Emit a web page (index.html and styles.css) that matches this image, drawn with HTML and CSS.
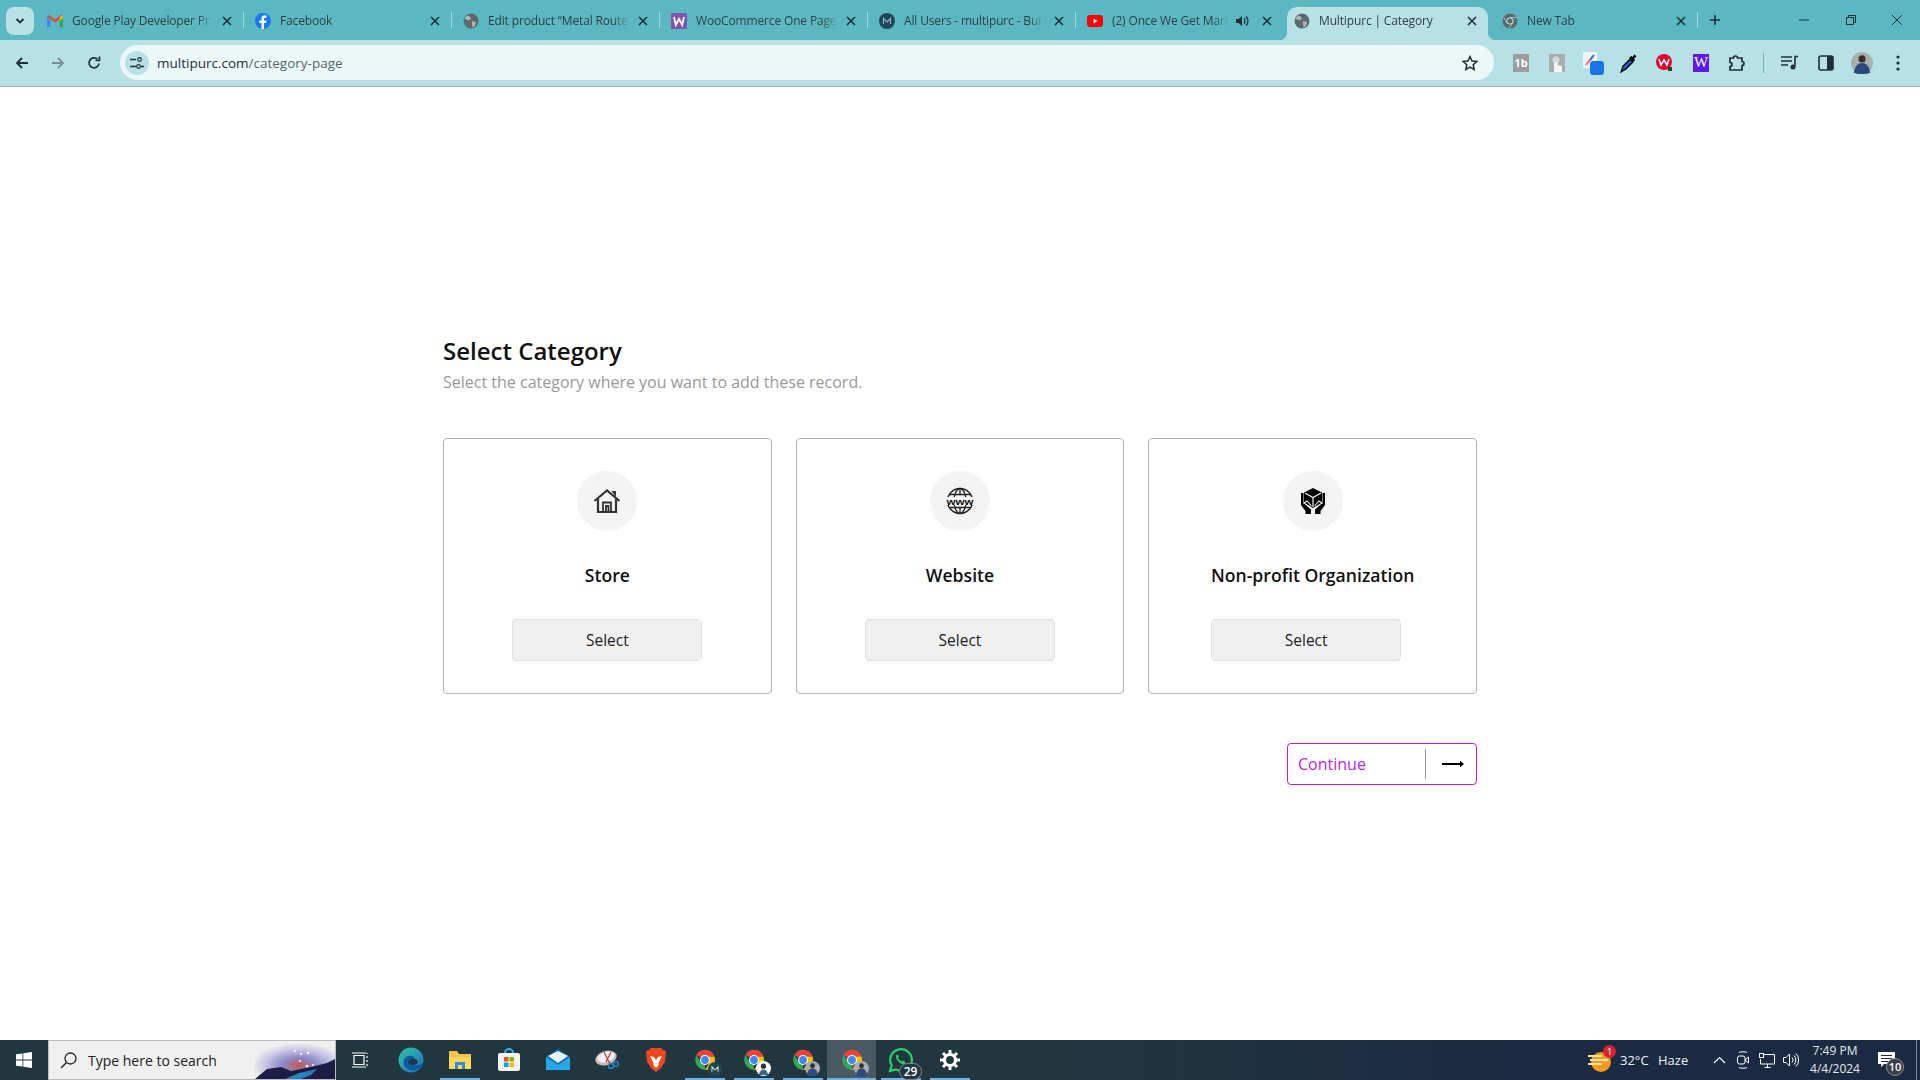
FILE: index.html
```html
<!DOCTYPE html>
<html lang="en">

<head>
  <meta charset="UTF-8">
  <title>Multipurc | Category</title>
  <link rel="stylesheet" href="styles.css">
</head>

<body>

  <svg class="defs" width="0" height="0">
    <defs>
      <symbol id="x" viewBox="0 0 10 10">
        <path d="M1 1l8 8M9 1l-8 8" stroke="#1f2f33" stroke-width="1.6" fill="none" />
      </symbol>
      <symbol id="globe" viewBox="0 0 16 16">
        <circle cx="8" cy="8" r="7.5" fill="#5c686b" />
        <path d="M4 2.500l3 1 1 2-2 2-3-1-1.500-1zM9 8l4 1-1 4-2.500 1.500L9 11z" fill="#a9b7ba" />
      </symbol>
      <symbol id="chrome" viewBox="0 0 24 24">
        <path d="M12 12L3.300 7A10 10 0 0 1 21.500 8.500H12z" fill="#ea4335" />
        <path d="M12 22A10.500 10.500 0 0 1 3.300 7L8 14.500 12 16z" fill="#34a853" />
        <path d="M21.500 8.500A10.500 10.500 0 0 1 12 22l4-6.500 0-7z" fill="#fbbc05" />
        <circle cx="12" cy="12" r="5" fill="#fff" />
        <circle cx="12" cy="12" r="3.900" fill="#4285f4" />
      </symbol>
      <symbol id="avatar" viewBox="0 0 16 16">
        <circle cx="8" cy="8" r="8" fill="#a9aeb0" />
        <path d="M2 15c1-5 3-7 6-7s5 2 6 7l-3 1H5z" fill="#2d4a7c" />
        <circle cx="8" cy="5" r="2.600" fill="#3a2c2a" />
      </symbol>
    </defs>
  </svg>

  <div class="tabstrip">
    <button class="tab-search">
      <svg width="10" height="8" viewBox="0 0 10 8"><path d="M1.500 2L5 5.500 8.500 2" stroke="#1f2f33" stroke-width="1.800" fill="none" /></svg>
    </button>

    <div class="tab">
      <svg class="fav" viewBox="0 0 16 12"><path d="M0 2v10h3.500V5z" fill="#4285f4" /><path d="M12.500 5v7H16V2z" fill="#34a853" /><path d="M0 1.500L8 7.500l8-6-2-1.500L8 4.500 2 0z" fill="#ea4335" /><path d="M13 1l3 .5V3l-3.500 2.500z" fill="#fbbc05" /></svg>
      <span class="tab-title">Google Play Developer Pr</span>
      <svg class="close"><use href="#x" /></svg>
    </div>
    <div class="tab">
      <svg class="fav" viewBox="0 0 16 16"><circle cx="8" cy="8" r="8" fill="#1877f2" /><path d="M9 16v-6h2l.400-2.500H9V6c0-.8.400-1.300 1.400-1.300h1.100V2.500C11 2.400 10.300 2.300 9.700 2.300 7.700 2.300 6.500 3.500 6.500 5.600v1.900h-2.200V10h2.200v6z" fill="#fff" /></svg>
      <span class="tab-title">Facebook</span>
      <svg class="close"><use href="#x" /></svg>
    </div>
    <div class="tab">
      <svg class="fav"><use href="#globe" /></svg>
      <span class="tab-title">Edit product “Metal Route</span>
      <svg class="close"><use href="#x" /></svg>
    </div>
    <div class="tab">
      <svg class="fav" viewBox="0 0 16 16"><rect width="16" height="16" rx="1" fill="#7f54b3" /><path d="M3 4l1.800 8L8 6l3.200 6L13 4" stroke="#fff" stroke-width="1.800" fill="none" /></svg>
      <span class="tab-title">WooCommerce One Page</span>
      <svg class="close"><use href="#x" /></svg>
    </div>
    <div class="tab">
      <svg class="fav" viewBox="0 0 16 16"><circle cx="8" cy="8" r="8" fill="#1f4655" /><path d="M4.500 11V5.500L8 9l3.500-3.500V11" stroke="#8fb4c0" stroke-width="1.200" fill="none" /></svg>
      <span class="tab-title">All Users - multipurc - Bui</span>
      <svg class="close"><use href="#x" /></svg>
    </div>
    <div class="tab tab-plain">
      <svg class="fav" viewBox="0 0 16 12"><rect width="16" height="12" rx="3" fill="#f00" /><path d="M6.500 3.500v5l4-2.500z" fill="#fff" /></svg>
      <span class="tab-title tab-title-audio">(2) Once We Get Marr</span>
      <svg class="speaker" viewBox="0 0 14 12"><path d="M0 4v4h2.500L6 11V1L2.500 4z" fill="#1f2f33" /><path d="M8 3.500a3.500 3.500 0 0 1 0 5M10 1.500a6 6 0 0 1 0 9" stroke="#1f2f33" stroke-width="1.300" fill="none" /></svg>
      <svg class="close"><use href="#x" /></svg>
    </div>
    <div class="tab tab-active">
      <svg class="fav"><use href="#globe" /></svg>
      <span class="tab-title">Multipurc | Category</span>
      <svg class="close"><use href="#x" /></svg>
    </div>
    <div class="tab tab-last">
      <svg class="fav" viewBox="0 0 16 16"><circle cx="8" cy="8" r="7.500" fill="#5c686b" /><circle cx="8" cy="8" r="3.600" fill="#b5d9de" /><circle cx="8" cy="8" r="2.500" fill="#5c686b" /><path d="M8 4.400h6.500M5 10l-3-5.500M10.800 10L7 15" stroke="#b5d9de" stroke-width=".8" /></svg>
      <span class="tab-title">New Tab</span>
      <svg class="close"><use href="#x" /></svg>
    </div>

    <svg class="new-tab" viewBox="0 0 12 12"><path d="M6 1v10M1 6h10" stroke="#1f2f33" stroke-width="1.600" /></svg>

    <div class="window-controls">
      <svg viewBox="0 0 12 12" width="12" height="12"><path d="M1 6h10" stroke="#1f2f33" /></svg>
      <svg viewBox="0 0 12 12" width="12" height="12"><path d="M1.500 3.500h7v7h-7zM3.500 3.500v-2h7v7h-2" stroke="#1f2f33" fill="none" /></svg>
      <svg viewBox="0 0 12 12" width="12" height="12"><path d="M1 1l10 10M11 1L1 11" stroke="#1f2f33" /></svg>
    </div>
  </div>

  <div class="toolbar">
    <svg class="nav-icon" viewBox="0 0 16 16"><path d="M14 8H3M8 3L3 8l5 5" stroke="#1f2f33" stroke-width="1.800" fill="none" /></svg>
    <svg class="nav-icon" viewBox="0 0 16 16"><path d="M2 8h11M8 3l5 5-5 5" stroke="#7c9094" stroke-width="1.800" fill="none" /></svg>
    <svg class="nav-icon" viewBox="0 0 16 16"><path d="M13 8.500A5 5 0 1 1 11.500 4.200M13.500 1.500v4h-4" stroke="#1f2f33" stroke-width="1.700" fill="none" /></svg>

    <div class="omnibox">
      <span class="site-info">
        <svg width="14" height="12" viewBox="0 0 14 12"><path d="M0 2.500h6M0 9.500h6M10 9.500h4" stroke="#1f2f33" stroke-width="1.400" /><circle cx="9.500" cy="2.500" r="1.800" fill="none" stroke="#1f2f33" stroke-width="1.200" /><circle cx="8.500" cy="9.500" r="1.800" fill="none" stroke="#1f2f33" stroke-width="1.200" /></svg>
      </span>
      <span class="url">multipurc.com<span class="url-path">/category-page</span></span>
      <svg class="star" viewBox="0 0 16 16"><path d="M8 1.500l2 4.500 4.800.5-3.600 3.200 1 4.800L8 12.100l-4.200 2.400 1-4.800L1.200 6.500 6 6z" fill="none" stroke="#1f2f33" stroke-width="1.500" /></svg>
    </div>

    <div class="extensions">
      <span class="ext"><span class="ext-box ext-grey">1b</span></span>
      <span class="ext">
        <svg width="16" height="18" viewBox="0 0 16 18"><rect width="16" height="18" fill="#a8acac" /><circle cx="7" cy="6" r="3.500" fill="#d7dada" /><path d="M5 18V9l3-1 1 3 4 1v6z" fill="#f4f4f4" /></svg>
      </span>
      <span class="ext">
        <svg width="22" height="24" viewBox="0 0 22 24"><rect x="1" y="1" width="14" height="16" rx="2" fill="#f2f5f6" /><path d="M4 14l7-9" stroke="#e8689a" stroke-width="2" /><path d="M8 9l4-5" stroke="#3d6fc4" stroke-width="2" /><rect x="8" y="10" width="14" height="14" rx="3" fill="#1a73e8" /></svg>
      </span>
      <span class="ext">
        <svg width="18" height="20" viewBox="0 0 18 20"><path d="M1 19l2-6 7-7 3 3-7 7z" fill="#2f55b5" stroke="#000" stroke-width="1.200" /><path d="M9 5l2-2 1.500 1 2-2.500 2 2-2.500 2 1 1.500-2 2z" fill="#000" /></svg>
      </span>
      <span class="ext">
        <svg width="18" height="20" viewBox="0 0 18 20"><circle cx="8" cy="9" r="8" fill="#dd0a2b" /><path d="M3 6l2 6 3-5 3 5 2-6" stroke="#fff" stroke-width="1.500" fill="none" /><rect x="12" y="14" width="4" height="4" fill="#3a3a20" /></svg>
      </span>
      <span class="ext"><span class="ext-box ext-purple">W</span></span>
      <span class="ext">
        <svg width="18" height="18" viewBox="0 0 18 18"><path d="M2 4h3.500a2 2 0 0 1 4 0H14v3.500a2 2 0 0 1 0 4V16H2v-3.500a2 2 0 0 0 0-4z" fill="none" stroke="#1f2f33" stroke-width="1.700" /></svg>
      </span>
      <span class="toolbar-sep"></span>
      <span class="ext">
        <svg width="18" height="16" viewBox="0 0 18 16"><path d="M0 2h11M0 6h11M0 10h7" stroke="#1f2f33" stroke-width="1.600" /><path d="M14 2v9" stroke="#1f2f33" stroke-width="1.600" /><path d="M13.500 1.500H17" stroke="#1f2f33" stroke-width="1.600" /><circle cx="12" cy="12" r="2.500" fill="#1f2f33" /></svg>
      </span>
      <span class="ext">
        <svg width="16" height="16" viewBox="0 0 16 16"><rect x="1" y="1" width="14" height="14" rx="2" fill="none" stroke="#1f2f33" stroke-width="1.600" /><rect x="9" y="1" width="6" height="14" fill="#1f2f33" /></svg>
      </span>
      <span class="ext"><svg width="22" height="22"><use href="#avatar" /></svg></span>
      <span class="ext">
        <svg width="4" height="16" viewBox="0 0 4 16"><circle cx="2" cy="2" r="1.600" fill="#1f2f33" /><circle cx="2" cy="8" r="1.600" fill="#1f2f33" /><circle cx="2" cy="14" r="1.600" fill="#1f2f33" /></svg>
      </span>
    </div>
  </div>

  <main class="page">
    <div class="wrap">
      <h1>Select Category</h1>
      <p class="lead">Select the category where you want to add these record.</p>

      <div class="cards">
        <div class="card">
          <div class="card-icon">
            <svg width="28" height="26" viewBox="0 0 28 26"><path d="M1.500 13L14 2.500 26.500 13" fill="none" stroke="#333" stroke-width="2.200" /><path d="M5 11v13h18V11" fill="none" stroke="#333" stroke-width="2.200" /><path d="M10 24v-9.500h8V24M13 24v-6h2.500v6" fill="none" stroke="#333" stroke-width="1.800" /><path d="M18.500 3h4.500v6z" fill="#333" /></svg>
          </div>
          <h2>Store</h2>
          <button class="select-btn">Select</button>
        </div>
        <div class="card">
          <div class="card-icon">
            <svg width="28" height="28" viewBox="0 0 28 28">
              <circle cx="14" cy="14" r="12.500" fill="none" stroke="#222" stroke-width="1.500" />
              <ellipse cx="14" cy="14" rx="6" ry="12.500" fill="none" stroke="#222" stroke-width="1.300" />
              <path d="M14 1.500v7M14 19.500v7M3.500 7.500h21M3.500 20.500h21" stroke="#222" stroke-width="1.300" />
              <rect x="0" y="10" width="28" height="8" fill="#f4f4f4" />
              <text class="www" x="14" y="17.500" text-anchor="middle" textLength="27" lengthAdjust="spacingAndGlyphs">www</text>
            </svg>
          </div>
          <h2>Website</h2>
          <button class="select-btn">Select</button>
        </div>
        <div class="card">
          <div class="card-icon">
            <svg width="26" height="28" viewBox="0 0 26 28">
              <path d="M13 1l9 4.500v10L13 21l-9-5.500v-10z" fill="#000" />
              <path d="M5 6l8 4.500L21 6M13 10.500V20" stroke="#f4f4f4" stroke-width="1.200" fill="none" />
              <path d="M1 6h2.500v10l7.500 6.500V27H5.500v-3L1 18zM25 6h-2.500v10L15 22.500V27h5.500v-3l4.500-6z" fill="#000" />
              <path d="M3.500 16.500L7 14l4.500 5M22.500 16.500L19 14l-4.500 5" stroke="#f4f4f4" stroke-width="1.100" fill="none" />
            </svg>
          </div>
          <h2>Non-profit Organization</h2>
          <button class="select-btn select-btn-off">Select</button>
        </div>
      </div>

      <div class="actions">
        <button class="continue-btn">
          <span class="continue-label">Continue</span>
          <span class="continue-arrow">
            <svg width="22" height="8" viewBox="0 0 22 8"><path d="M0 4h19" stroke="#000" stroke-width="2" /><path d="M18 .8L22 4l-4 3.200z" fill="#000" /></svg>
          </span>
        </button>
      </div>
    </div>
  </main>

  <footer class="taskbar">
    <span class="start">
      <svg width="16" height="16" viewBox="0 0 16 16"><path d="M0 2.300l6.500-.9v6.200H0zM7.300 1.300L16 0v7.600H7.300zM0 8.400h6.500v6.200L0 13.700zM7.300 8.400H16V16l-8.700-1.300z" fill="#fff" /></svg>
    </span>
    <div class="search">
      <svg width="17" height="17" viewBox="0 0 17 17"><circle cx="10.500" cy="6.500" r="5.500" fill="none" stroke="#222" stroke-width="1.300" /><path d="M6.500 10.500L1 16" stroke="#222" stroke-width="1.500" /></svg>
      <span class="search-text">Type here to search</span>
      <svg class="search-art" width="80" height="38" viewBox="0 0 80 38">
        <defs>
          <radialGradient id="glow" cx=".55" cy=".65" r=".6">
            <stop offset="0" stop-color="#c9584f" />
            <stop offset=".35" stop-color="#8a88c8" />
            <stop offset=".7" stop-color="#c5c5e5" />
            <stop offset="1" stop-color="#f0f0f0" />
          </radialGradient>
        </defs>
        <rect width="80" height="38" fill="url(#glow)" />
        <path d="M0 38l12-10 14-2 10 4 20-4 16-4 8-4v20z" fill="#1b1d44" />
        <path d="M30 38l14-6 18-4-6 6-10 4z" fill="#2a7fc0" />
        <g fill="#fff"><circle cx="40" cy="10" r="1" /><circle cx="46" cy="13" r="1" /><circle cx="53" cy="12" r="1.300" /><circle cx="45" cy="20" r="1" /><circle cx="52" cy="25" r="1.300" /><circle cx="58" cy="24" r="1" /></g>
      </svg>
    </div>

    <div class="task-icons">
      <span class="slot slot-view">
        <svg width="16" height="16" viewBox="0 0 16 16"><path d="M2 3.500h10v9H2zM0 1h14M0 15h14M15 4v2M15 8v2M15 12v2M15 1v1" stroke="#fff" stroke-width="1.200" fill="none" /></svg>
      </span>
      <span class="slot">
        <svg width="26" height="26" viewBox="0 0 26 26">
          <defs><linearGradient id="edge" x1="0" y1="0" x2="1" y2="1"><stop offset="0" stop-color="#36c5a3" /><stop offset="1" stop-color="#1a6fc4" /></linearGradient></defs>
          <circle cx="13" cy="13" r="12.500" fill="url(#edge)" />
          <path d="M25 16c-2 7-12 10-17 5-4-4-3-10 2-12 4-1 8 1 7 5h-6c0 3 5 5 9 4 2 0 4-1 5-2z" fill="#0c59a4" />
          <ellipse cx="15" cy="15" rx="5" ry="3" fill="#21363f" />
        </svg>
      </span>
      <span class="slot slot-open">
        <svg width="24" height="20" viewBox="0 0 24 20"><path d="M1 1h8l2 3h12v15H1z" fill="#f5c242" /><rect x="1" y="7" width="22" height="12" fill="#fbd65e" /><rect x="7" y="12" width="10" height="7" fill="#2f8fd6" /><rect x="10" y="15" width="4" height="4" fill="#fbd65e" /></svg>
      </span>
      <span class="slot">
        <svg width="24" height="24" viewBox="0 0 24 24"><path d="M8 5a4 4 0 0 1 8 0" stroke="#2bb5ee" stroke-width="2" fill="none" /><rect x="1" y="5" width="22" height="18" rx="2" fill="#f3f3f3" /><rect x="7" y="9" width="4.500" height="4.500" fill="#f25022" /><rect x="12.500" y="9" width="4.500" height="4.500" fill="#7fba00" /><rect x="7" y="14.500" width="4.500" height="4.500" fill="#00a4ef" /><rect x="12.500" y="14.500" width="4.500" height="4.500" fill="#ffb900" /></svg>
      </span>
      <span class="slot">
        <svg width="24" height="24" viewBox="0 0 24 24"><path d="M12 1L24 9v13H0V9z" fill="#0f6cbd" /><path d="M0 9l12 8 12-8v13H0z" fill="#28a8ea" /><path d="M2 8l10-5 10 5-10 7z" fill="#e8f4fb" /></svg>
      </span>
      <span class="slot">
        <svg width="24" height="22" viewBox="0 0 24 22"><ellipse cx="11" cy="9" rx="11" ry="7" fill="#c9b8b8" transform="rotate(-18 11 9)" /><ellipse cx="11" cy="8" rx="9" ry="5" fill="#f3f3f3" transform="rotate(-18 11 8)" /><path d="M9 3l6 12M16 3L11 13" stroke="#c2343a" stroke-width="1.200" /><circle cx="16" cy="17" r="2.500" fill="none" stroke="#2a86c8" stroke-width="1.500" /><circle cx="21" cy="15" r="2.500" fill="none" stroke="#2a86c8" stroke-width="1.500" /></svg>
      </span>
      <span class="slot">
        <svg width="20" height="24" viewBox="0 0 20 24"><path d="M5 0h10l2 2 3 1-1 11-5 7-4 3-4-3-5-7L0 3l3-1z" fill="#f1451d" /><path d="M4 8l4 1 2 3 2-3 4-1-3 6-1 4-2 2-2-2-1-4z" fill="#fff" /></svg>
      </span>
      <span class="slot slot-open">
        <span class="icon-stack">
          <svg width="24" height="24"><use href="#chrome" /></svg>
          <svg class="stack-badge" width="14" height="14" viewBox="0 0 16 16"><circle cx="8" cy="8" r="8" fill="#1f4655" /><path d="M4.500 11V5.500L8 9l3.500-3.500V11" stroke="#c3d4da" stroke-width="1.200" fill="none" /></svg>
        </span>
      </span>
      <span class="slot slot-open">
        <span class="icon-stack">
          <svg width="24" height="24"><use href="#chrome" /></svg>
          <svg class="stack-badge" width="15" height="15" viewBox="0 0 16 16"><circle cx="8" cy="8" r="8" fill="#fff" /><path d="M3 15c1-4 2-6 5-6s4 2 5 6z" fill="#2f6a8e" /><circle cx="8" cy="5.500" r="2.800" fill="#3a2c2a" /></svg>
        </span>
      </span>
      <span class="slot slot-open">
        <span class="icon-stack">
          <svg width="24" height="24"><use href="#chrome" /></svg>
          <svg class="stack-badge" width="15" height="15"><use href="#avatar" /></svg>
        </span>
      </span>
      <span class="slot slot-open slot-active">
        <span class="icon-stack">
          <svg width="24" height="24"><use href="#chrome" /></svg>
          <svg class="stack-badge" width="15" height="15"><use href="#avatar" /></svg>
        </span>
      </span>
      <span class="slot slot-open">
        <span class="icon-stack">
          <svg width="25" height="25" viewBox="0 0 25 25"><path d="M2 23l1.600-5.800A10.800 10.800 0 1 1 8 21.500z" fill="none" stroke="#25d366" stroke-width="2.200" /><path d="M8.500 7c-1 1.500-.5 4 2 6.500s5 3.500 6.500 2l.5-1.500-3-1.500-1 1c-1-.5-3-2.500-3.500-3.500l1-1L9.800 6.500z" fill="#25d366" /></svg>
          <span class="count-badge">29</span>
        </span>
      </span>
      <span class="slot slot-open">
        <svg width="20" height="20" viewBox="0 0 20 20"><circle cx="10" cy="10" r="5.500" fill="none" stroke="#fff" stroke-width="3.200" /><path d="M10 0v4M10 16v4M0 10h4M16 10h4M3 3l3 3M14 14l3 3M17 3l-3 3M6 14l-3 3" stroke="#fff" stroke-width="3" /></svg>
      </span>
    </div>

    <div class="tray">
      <span class="weather">
        <span class="icon-stack">
          <svg width="25" height="24" viewBox="0 0 25 24"><circle cx="13" cy="14" r="10" fill="#f49a1f" /><path d="M0 8h14M2 12h18M0 16h14" stroke="#f7e2a6" stroke-width="2" /></svg>
          <span class="weather-alert">1</span>
        </span>
      </span>
      <span class="tray-text temp">32°C</span>
      <span class="tray-text haze">Haze</span>
      <span class="tray-icon"><svg width="13" height="8" viewBox="0 0 13 8"><path d="M1 7l5.500-5.500L12 7" stroke="#fff" stroke-width="1.200" fill="none" /></svg></span>
      <span class="tray-icon"><svg width="12" height="18" viewBox="0 0 12 18"><path d="M2 1.500c2-1 6-1 8 0M2 16.500c2 1 6 1 8 0" stroke="#fff" fill="none" /><rect x=".5" y="5" width="7.500" height="8" rx="2" fill="none" stroke="#fff" /><path d="M8 9l3.500-3v6z" fill="none" stroke="#fff" /></svg></span>
      <span class="tray-icon"><svg width="16" height="15" viewBox="0 0 16 15"><path d="M4 1.500h11.500V11H1.500V6" fill="none" stroke="#fff" /><rect x=".5" y=".5" width="4" height="4" fill="#1a2a42" stroke="#fff" /><path d="M8.500 11v3M5.500 14.500h6" stroke="#fff" /></svg></span>
      <span class="tray-icon"><svg width="16" height="14" viewBox="0 0 16 14"><path d="M.5 4.500v5h2.500l3.500 3.500V1L3 4.500z" fill="none" stroke="#fff" /><path d="M9 4.500a3.500 3.500 0 0 1 0 5M11 2.500a6.500 6.500 0 0 1 0 9M13 .5a9.500 9.500 0 0 1 0 13" stroke="#fff" fill="none" /></svg></span>
      <span class="clock">7:49 PM<br>4/4/2024</span>
      <span class="notify">
        <span class="icon-stack">
          <svg width="17" height="16" viewBox="0 0 17 16"><path d="M0 0h17v12H6l-3 3v-3H0z" fill="#fff" /><path d="M3 3.500h11M3 6.500h11M3 9.500h7" stroke="#1a2a42" /></svg>
          <span class="notify-count">10</span>
        </span>
      </span>
      <span class="show-desktop"></span>
    </div>
  </footer>

</body>

</html>
```

FILE: styles.css
```css
* {
  box-sizing: border-box;
}

body {
  margin: 0;
  width: 1920px;
  height: 1080px;
  display: flex;
  flex-direction: column;
  overflow: hidden;
  background: #fff;
  font-family: 'Open Sans', sans-serif;
}

.defs {
  position: absolute;
}

button {
  font-family: inherit;
  cursor: pointer;
}

/* browser tabs */
.tabstrip {
  height: 40px;
  flex: none;
  display: flex;
  align-items: flex-end;
  background: #5bb8c2;
}

.tab-search {
  width: 28px;
  height: 28px;
  margin: 0 2px 5px 6px;
  padding: 0;
  border: 0;
  border-radius: 8px;
  background: #b8e1e6;
  display: flex;
  align-items: center;
  justify-content: center;
  align-self: flex-end;
  flex: none;
}

.tab {
  width: 208px;
  height: 33px;
  flex: none;
  display: flex;
  align-items: center;
  padding: 0 12px 6px 11px;
  font-size: 12px;
  letter-spacing: -0.15px;
  color: #2f4044;
  background: linear-gradient(#a4d6db, #a4d6db) right top 5px / 1px 16px no-repeat;
}

.tab-plain {
  background: none;
}

.tab-last {
  width: 210px;
  padding: 0 12px 6px 14px;
}

.tab-active {
  position: relative;
  margin-left: 3px;
  width: 201px;
  padding: 0 11px 6px 7px;
  background: #b8e1e6;
  border-radius: 10px 10px 0 0;
}

.tab-active::before,
.tab-active::after {
  content: "";
  position: absolute;
  bottom: 0;
  width: 8px;
  height: 8px;
}

.tab-active::before {
  left: -8px;
  background: radial-gradient(circle at 0 0, transparent 8px, #b8e1e6 8.500px);
}

.tab-active::after {
  right: -8px;
  background: radial-gradient(circle at 100% 0, transparent 8px, #b8e1e6 8.500px);
}

.fav {
  width: 16px;
  height: 16px;
  flex: none;
  margin-right: 9px;
}

.tab-title {
  flex: 1;
  overflow: hidden;
  white-space: nowrap;
  -webkit-mask-image: linear-gradient(to right, #000 88%, transparent);
  mask-image: linear-gradient(to right, #000 88%, transparent);
}

.tab-title-audio {
  flex: 0 0 116px;
}

.speaker {
  width: 14px;
  height: 12px;
  margin-left: 8px;
  flex: none;
  margin-right: auto;
}

.close {
  width: 10px;
  height: 10px;
  flex: none;
  margin-left: 8px;
}

.new-tab {
  width: 12px;
  height: 12px;
  margin: 0 0 14px 11px;
  align-self: flex-end;
  flex: none;
}

.window-controls {
  margin-left: auto;
  width: 140px;
  padding: 0 17px 0 18px;
  display: flex;
  justify-content: space-between;
  align-self: center;
}

/* address bar row */
.toolbar {
  height: 47px;
  flex: none;
  display: flex;
  align-items: center;
  padding: 0 0 1px 14px;
  background: #b8e1e6;
  border-bottom: 1px solid #9cbcc0;
}

.nav-icon {
  width: 16px;
  height: 16px;
  margin-right: 20px;
  flex: none;
}

.omnibox {
  width: 1374px;
  height: 35px;
  margin-left: -2px;
  padding: 0 16px 0 5px;
  display: flex;
  align-items: center;
  background: #ecf8f8;
  border-radius: 18px;
  flex: none;
}

.site-info {
  width: 24px;
  height: 24px;
  margin-right: 8px;
  display: flex;
  align-items: center;
  justify-content: center;
  border-radius: 50%;
  background: #b8e1e6;
}

.url {
  font-size: 13.500px;
  color: #1f2f33;
}

.url-path {
  color: #556669;
}

.star {
  width: 16px;
  height: 16px;
  margin-left: auto;
}

.extensions {
  display: flex;
  align-items: center;
  margin-left: 9px;
}

.ext {
  width: 36px;
  height: 30px;
  display: flex;
  align-items: center;
  justify-content: center;
  flex: none;
}

.ext-box {
  width: 16px;
  height: 18px;
  display: flex;
  align-items: center;
  justify-content: center;
  font-size: 11px;
  font-weight: 700;
  color: #fff;
}

.ext-grey {
  background: #9a9d9e;
}

.ext-purple {
  background: #5f17ea;
  font-family: 'Liberation Serif', serif;
  font-size: 15px;
  font-weight: 400;
}

.toolbar-sep {
  width: 1px;
  height: 20px;
  margin: 0 8px;
  background: #5bb8c2;
  flex: none;
}

/* page */
.page {
  flex: 1;
}

.wrap {
  width: 1034px;
  margin: 0 auto;
  padding-top: 248px;
}

h1 {
  margin: 0;
  font-size: 24px;
  line-height: 32px;
  font-weight: 600;
  color: #111;
}

.lead {
  margin: 4px 0 0;
  font-size: 16px;
  line-height: 22px;
  color: #999;
}

.cards {
  margin-top: 45px;
  display: grid;
  grid-template-columns: repeat(3, 1fr);
  gap: 24px;
}

.card {
  height: 256px;
  padding-top: 32px;
  display: flex;
  flex-direction: column;
  align-items: center;
  border: 1px solid #b3b3b3;
  border-radius: 4px;
}

.card-icon {
  width: 60px;
  height: 60px;
  display: flex;
  align-items: center;
  justify-content: center;
  border-radius: 50%;
  background: #f4f4f4;
}

.www {
  font-family: 'Liberation Sans', sans-serif;
  font-size: 9.500px;
  font-weight: 700;
  fill: #111;
}

h2 {
  margin: 32px 0 32px;
  font-size: 17.600px;
  line-height: 24px;
  font-weight: 600;
  color: #111;
}

.select-btn {
  width: 190px;
  height: 42px;
  padding: 0;
  border: 1px solid #e0e0e0;
  border-radius: 4px;
  background: #f0f0f0;
  font-size: 15.500px;
  color: #222;
}

.select-btn-off {
  margin-right: 13px;
}

.actions {
  margin-top: 49px;
  display: flex;
  justify-content: flex-end;
}

.continue-btn {
  width: 190px;
  height: 42px;
  padding: 5px 0;
  display: flex;
  align-items: stretch;
  background: #fff;
  border: 1px solid #d815b5;
  border-radius: 4px;
}

.continue-label {
  width: 137px;
  padding-left: 10px;
  text-align: left;
  align-self: center;
  font-size: 16px;
  line-height: 22px;
  color: #b51ff0;
}

.continue-arrow {
  flex: 1;
  padding-left: 3px;
  display: flex;
  align-items: center;
  justify-content: center;
  border-left: 1px solid #999;
}

/* windows taskbar */
.taskbar {
  height: 40px;
  flex: none;
  display: flex;
  align-items: stretch;
  background: linear-gradient(to right, #21363f 0%, #21363f 55%, #1a2a42 80%, #1a2a42 100%);
}

.start {
  width: 48px;
  display: flex;
  align-items: center;
  justify-content: center;
  flex: none;
}

.search {
  width: 288px;
  margin-right: 1px;
  padding-left: 11px;
  display: flex;
  align-items: center;
  background: #f0f0f0;
  border: 1px solid #bbb;
  overflow: hidden;
  flex: none;
}

.search-text {
  margin-left: 11px;
  font-size: 14px;
  color: #222;
}

.search-art {
  margin-left: auto;
  flex: none;
}

.task-icons {
  display: flex;
  flex: none;
}

.slot {
  width: 49px;
  display: flex;
  align-items: center;
  justify-content: center;
}

.slot-view {
  padding-right: 3px;
}

.slot-open {
  background: linear-gradient(#6cb4ea, #6cb4ea) center bottom / 40px 2px no-repeat;
}

.slot-active {
  background: linear-gradient(#6cb4ea, #6cb4ea) center bottom / 100% 2px no-repeat, #4a5a63;
}

.icon-stack {
  position: relative;
  display: flex;
}

.stack-badge {
  position: absolute;
  right: -5px;
  bottom: -4px;
}

.count-badge {
  position: absolute;
  right: -9px;
  bottom: -7px;
  width: 23px;
  height: 17px;
  text-align: center;
  font-size: 12px;
  line-height: 15px;
  font-weight: 600;
  color: #fff;
  background: #21363f;
  border: 1px solid #7d8b91;
  border-radius: 9px;
}

.tray {
  margin-left: auto;
  display: flex;
  align-items: center;
  color: #fff;
}

.weather {
  width: 37px;
  padding-right: 2px;
  display: flex;
  justify-content: center;
}

.weather-alert {
  position: absolute;
  top: -3px;
  right: -3px;
  width: 13px;
  height: 13px;
  text-align: center;
  font-size: 9px;
  line-height: 13px;
  color: #fff;
  background: #d9232e;
  border-radius: 50%;
}

.tray-text {
  font-size: 13px;
  color: #f0f0f0;
}

.temp {
  width: 38px;
}

.haze {
  width: 49px;
}

.tray-icon {
  width: 24px;
  display: flex;
  justify-content: center;
  flex: none;
}

.clock {
  width: 64px;
  text-align: center;
  font-size: 12px;
  line-height: 18px;
  color: #e8e8e8;
}

.notify {
  width: 40px;
  padding-right: 1px;
  display: flex;
  justify-content: center;
}

.notify-count {
  position: absolute;
  right: -9px;
  bottom: -8px;
  width: 18px;
  height: 18px;
  text-align: center;
  font-size: 11px;
  line-height: 16px;
  font-weight: 600;
  color: #fff;
  background: #3a3f46;
  border: 1px solid #8a8f95;
  border-radius: 50%;
}

.show-desktop {
  width: 13px;
  height: 100%;
  background: linear-gradient(#7c8796, #7c8796) right 3px top / 1px 100% no-repeat;
}
```
